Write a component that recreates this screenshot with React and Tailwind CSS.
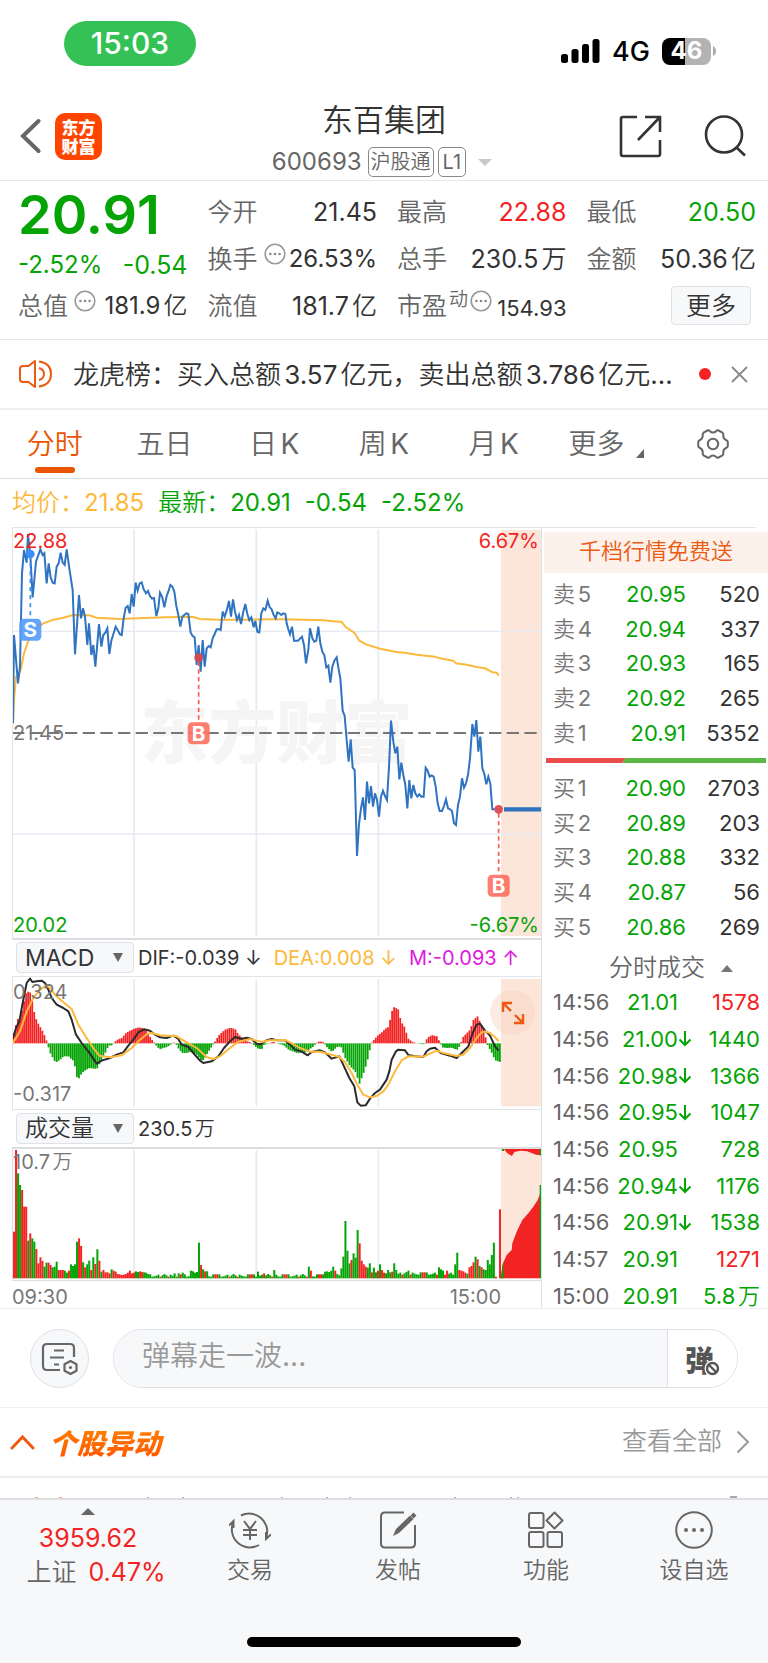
import React from "react";

const GREEN = "#05a405";
const RED = "#f42323";

/* Chart data is stored in thirds of a pixel; x runs from 39 to 1623. */
const PRICE_MORNING = [
  [39, 610], [42, 345], [54, 490], [60, 440], [66, 160], [72, 90], [80, 128], [84, 42], [91, 105], [98, 232],
  [108, 125], [121, 88], [128, 105], [133, 100], [140, 190], [146, 130], [152, 172], [158, 188], [164, 190],
  [170, 140], [176, 130], [182, 98], [188, 128], [194, 135], [200, 88], [208, 145], [218, 210], [225, 403],
  [237, 225], [243, 295], [249, 265], [255, 290], [262, 375], [267, 310], [274, 405], [280, 375], [286, 440],
  [297, 312], [304, 380], [310, 345], [316, 338], [322, 325], [328, 402], [334, 362], [347, 320], [354, 332],
  [360, 343], [365, 345], [371, 295], [377, 263], [383, 258], [389, 280], [395, 222], [401, 260], [407, 188],
  [413, 212], [419, 190], [425, 187], [431, 208], [438, 220], [444, 213], [450, 228], [456, 236], [462, 234],
  [469, 288], [475, 265], [480, 218], [487, 232], [493, 262], [500, 228], [506, 212], [511, 195], [517, 200],
  [523, 215], [529, 258], [535, 285], [541, 320], [547, 290], [553, 285], [559, 280], [565, 282], [572, 338],
  [578, 348], [584, 352], [590, 435], [596, 375], [602, 455], [608, 360], [614, 440], [620, 385], [626, 378],
  [632, 382], [638, 355], [644, 342], [650, 328], [656, 327], [662, 330], [668, 275], [674, 290], [680, 272],
  [687, 243], [693, 290], [699, 238], [705, 275], [711, 300], [717, 285], [723, 312], [729, 280], [736, 252],
  [742, 282], [748, 300], [754, 292], [761, 322], [766, 303], [772, 335], [778, 337], [784, 280], [790, 265],
  [796, 270], [803, 242], [809, 262],
];
const PRICE_AFTERNOON = [
  [5, 268], [11, 285], [17, 295], [22, 277], [28, 280], [34, 285], [40, 280], [46, 282], [50, 310], [54, 325],
  [60, 343], [66, 320], [72, 362], [84, 362], [96, 350], [102, 375], [108, 430], [115, 390], [120, 325],
  [127, 355], [133, 365], [139, 362], [145, 320], [151, 370], [157, 395], [163, 405], [169, 442], [175, 437],
  [181, 488], [187, 440], [193, 422], [200, 412], [206, 448], [211, 475], [218, 572], [224, 588], [230, 660],
  [236, 725], [242, 658], [248, 743], [254, 750], [261, 1008], [267, 912], [273, 865], [279, 832], [285, 900],
  [291, 785], [297, 850], [303, 798], [309, 860], [315, 820], [321, 840], [327, 890], [333, 830], [339, 812],
  [345, 828], [351, 840], [357, 740], [363, 602], [370, 665], [376, 700], [382, 680], [388, 778], [394, 728],
  [400, 765], [406, 795], [412, 865], [418, 780], [424, 835], [430, 795], [436, 820], [442, 830], [448, 823],
  [454, 830], [461, 830], [467, 743], [473, 752], [479, 770], [485, 766], [491, 770], [497, 800], [503, 850],
  [509, 873], [516, 873], [522, 858], [528, 838], [534, 865], [540, 868], [546, 873], [552, 910], [558, 915],
  [564, 855], [570, 830], [576, 775], [582, 803], [588, 790], [594, 765], [600, 715], [607, 612], [613, 650],
  [619, 600], [625, 695], [631, 650], [637, 745], [643, 762], [649, 793], [655, 770], [661, 790], [667, 868],
  [686, 868],
];
const AVG_MORNING = [
  [39, 610], [42, 540], [48, 470], [54, 468], [62, 450], [72, 400], [82, 370], [92, 345], [105, 328],
  [130, 310], [160, 299], [190, 293], [218, 285], [268, 286], [290, 293], [360, 297], [430, 294], [500, 292],
  [540, 291], [580, 291], [600, 297], [660, 299], [740, 299], [809, 298],
];
const AVG_AFTERNOON = [
  [40, 298], [100, 299], [160, 301], [215, 306], [228, 322], [253, 338], [268, 362], [290, 374], [330, 386],
  [380, 396], [410, 399], [440, 404], [495, 410], [510, 415], [550, 422], [558, 430], [590, 434], [620, 441],
  [645, 445], [668, 457], [680, 458], [686, 467],
];
const HIST_MORNING = [
  [38, 320], [45, 300], [50, 268], [60, 268], [70, 220], [78, 190], [88, 183], [95, 205], [100, 240],
  [110, 275], [120, 292], [130, 310], [138, 330], [141, 341], [150, 370], [166, 399], [180, 390], [190, 380],
  [205, 380], [215, 390], [222, 395], [228, 440], [235, 448], [245, 430], [258, 420], [268, 415], [290, 418],
  [300, 398], [315, 370], [325, 348], [335, 347], [341, 341], [345, 335], [355, 328], [365, 325], [375, 312],
  [385, 305], [400, 298], [415, 293], [430, 296], [440, 305], [450, 322], [460, 337], [465, 341], [470, 352],
  [480, 358], [500, 352], [510, 346], [514, 341], [520, 338], [527, 341], [532, 352], [545, 370], [560, 370],
  [575, 365], [590, 375], [605, 395], [612, 388], [622, 370], [635, 350], [641, 341], [645, 335], [655, 318],
  [665, 308], [675, 300], [690, 294], [705, 298], [715, 315], [725, 323], [740, 335], [752, 338], [756, 341],
  [762, 347], [775, 358], [785, 358], [790, 346], [800, 343], [806, 341],
];
const HIST_AFTERNOON = [
  [10, 336], [17, 341], [40, 346], [55, 360], [80, 370], [105, 368], [130, 350], [137, 341], [145, 336],
  [157, 336], [162, 341], [170, 352], [185, 367], [200, 352], [212, 350], [225, 385], [240, 410], [255, 425],
  [268, 462], [280, 430], [290, 400], [300, 355], [303, 341], [310, 332], [322, 318], [335, 308], [345, 297],
  [355, 292], [365, 245], [372, 232], [385, 240], [392, 275], [405, 295], [412, 325], [425, 336], [440, 341],
  [460, 344], [467, 341], [470, 325], [485, 316], [500, 320], [508, 336], [511, 341], [515, 353], [530, 355],
  [545, 354], [560, 361], [568, 350], [572, 341], [576, 325], [590, 310], [600, 300], [610, 270], [622, 260],
  [630, 278], [640, 300], [648, 330], [650, 341], [655, 352], [665, 370], [675, 392], [690, 397],
];
const DIF_MORNING = [
  [39, 325], [48, 295], [58, 275], [68, 220], [80, 160], [90, 147], [97, 157], [110, 155], [125, 153],
  [135, 160], [145, 180], [155, 205], [170, 225], [190, 235], [205, 245], [215, 270], [228, 315], [245, 340],
  [265, 365], [290, 402], [305, 393], [330, 385], [350, 375], [370, 368], [385, 348], [400, 330], [415, 308],
  [432, 299], [450, 303], [465, 315], [480, 323], [500, 325], [520, 318], [535, 328], [545, 345], [565, 352],
  [580, 370], [600, 393], [610, 400], [635, 395], [655, 380], [672, 355], [690, 335], [705, 322], [725, 328],
  [740, 324], [755, 328], [770, 342], [780, 344], [800, 332],
];
const DIF_AFTERNOON = [
  [5, 328], [20, 332], [45, 332], [60, 345], [75, 360], [95, 366], [113, 377], [125, 367], [150, 362],
  [165, 368], [185, 387], [208, 380], [222, 410], [238, 445], [253, 470], [262, 518], [272, 528], [287, 527],
  [300, 507], [315, 490], [330, 480], [350, 450], [358, 425], [365, 390], [378, 365], [385, 360], [405, 362],
  [415, 376], [435, 380], [460, 382], [470, 365], [480, 357], [495, 354], [512, 370], [540, 378], [560, 385],
  [575, 370], [595, 350], [608, 310], [620, 285], [630, 282], [645, 303], [660, 318], [675, 350], [686, 363],
];
const DEA_MORNING = [
  [39, 340], [60, 305], [80, 245], [100, 205], [120, 180], [138, 168], [150, 175], [165, 195], [190, 218],
  [215, 238], [235, 285], [260, 325], [280, 355], [298, 378], [330, 383], [365, 377], [395, 355], [415, 335],
  [440, 314], [455, 310], [480, 317], [530, 320], [560, 338], [590, 355], [620, 382], [640, 388], [660, 380],
  [690, 355], [715, 336], [750, 328], [785, 337], [808, 332],
];
const DEA_AFTERNOON = [
  [45, 331], [60, 338], [90, 355], [120, 366], [150, 366], [180, 374], [208, 382], [225, 398], [245, 430],
  [262, 465], [280, 495], [300, 503], [320, 499], [340, 485], [355, 465], [375, 425], [395, 392], [415, 380],
  [460, 381], [480, 372], [500, 363], [520, 370], [560, 379], [580, 375], [600, 355], [620, 325], [635, 308],
  [645, 305], [660, 310], [675, 322], [686, 335],
];

const join = (a, b) => a.concat(b.map(([x, y]) => [x + 810, y]));
const toPoints = (pts) => pts.map((p) => p.join(",")).join(" ");

const STEP = 6.1;
const barX = (i) => 39 + i * STEP;

function valueAt(pts, x) {
  for (let i = 1; i < pts.length; i++) {
    if (pts[i][0] >= x) {
      const [x0, y0] = pts[i - 1];
      const [x1, y1] = pts[i];
      return y0 + ((y1 - y0) * (x - x0)) / (x1 - x0);
    }
  }
  return pts[pts.length - 1][1];
}

const OPENING_VOLUME =
  "r905 r660 g730 g765 r780 r830 r830 g932 r910 g925 g935 r957 r1000 r982 r993 g1010 g998 r998 r1005 g1012 g1010 g995 r1020 r1020 r1020 g1022 g1028 r1022 g1003 g1008 g1003 g935 r925 r948 g997 r1012 g1003 g992 r1020 g982 r1002 g958 r992 g1025 r1020 r1027 r1027 r1030 g1018 r1022 r1025 r1032 r1033 r1035 r1034 r1032 r1028 r1022 r1030 r1028 g1024 g1026 r1024 r1026 g1027 g1028 g1032".split(
    " "
  );
const LATER_VOLUME = {
  79: "g1030", 81: "g1030", 83: "g1028", 87: "g1022", 88: "g1024", 89: "g1028", 90: "g1026", 91: "g938",
  92: "r1005", 93: "g1018", 94: "r1024", 95: "g1024", 120: "g1025", 123: "r1030", 128: "g1020", 129: "g1034",
  145: "g1010", 146: "r1022", 153: "g1025", 154: "g1024", 155: "g1026", 156: "g1022", 157: "g1010",
  158: "r1022", 161: "g1015", 162: "g980", 163: "g873", 164: "g962", 165: "g1000", 166: "r990", 167: "g970",
  168: "g983", 169: "g900", 170: "r940", 171: "r992", 172: "r1003", 173: "r1010", 174: "g1013", 175: "g1000",
  176: "r1027", 177: "g1013", 178: "g1027", 179: "r1022", 180: "g1003", 181: "r1020", 182: "r1028",
  183: "g1030", 184: "g1020", 185: "g1027", 186: "r1025", 187: "g1000", 188: "g1020", 194: "g1022",
  209: "g1012", 210: "g1018", 211: "g1022", 213: "r1022", 215: "g1028", 217: "g1003", 218: "g968",
  219: "r1020", 220: "r1022", 221: "r1024", 222: "r1028", 224: "r1012", 225: "r1008", 226: "r997",
  227: "g980", 228: "r988", 229: "g1008", 230: "r1012", 231: "g1018", 232: "g1020", 233: "g990",
  234: "g1003", 235: "g975", 236: "g938", 237: "r1040", 238: "", 239: "r838",
};

function volumeBars() {
  const bars = [];
  for (let i = 0; i < 240; i++) {
    let spec = OPENING_VOLUME[i] ?? LATER_VOLUME[i];
    if (spec === undefined) {
      const n = (i * 7919 + 13 * i * i) % 17;
      spec = (n % 2 ? "r" : "g") + (1040 - (n % 9) - (i > 185 ? 6 : 0));
    }
    if (spec) bars.push({ i, color: spec[0] === "r" ? RED : GREEN, top: Number(spec.slice(1)) });
  }
  return bars;
}

function GridLines({ top, bottom }) {
  return (
    <g stroke="#e6eaf2" strokeWidth="5">
      <line x1="402" x2="402" y1={top} y2={bottom} />
      <line x1="769" x2="769" y1={top} y2={bottom} />
      <line x1="1135" x2="1135" y1={top} y2={bottom} />
    </g>
  );
}

function TradeMark({ x, y, letter, fill }) {
  return (
    <g>
      <rect x={x - 33} y={y - 33} width="66" height="66" rx="13" fill={fill} fillOpacity="0.92" />
      <text x={x} y={y + 22} textAnchor="middle" fontSize="62" fontWeight="700" fill="#fff" fontFamily="Inter, sans-serif">
        {letter}
      </text>
    </g>
  );
}

function PriceChart() {
  return (
    <div className="relative h-[411px] border-t border-l border-[#e2e4ea]">
      <svg className="block h-full w-full" viewBox="39 24 1584 1230" preserveAspectRatio="none" aria-label="分时走势">
        <rect x="1503" y="30" width="120" height="1218" fill="#fce5d9" />
        <GridLines top={28} bottom={1248} />
        <g stroke="#e6eaf2" strokeWidth="4">
          <line x1="36" x2="1623" y1="334" y2="334" />
          <line x1="36" x2="1623" y1="942" y2="942" />
        </g>
        <text x="829" y="715" textAnchor="middle" fontSize="204" fontWeight="900" fill="#f5f5f6" fontFamily="Noto Sans CJK SC, sans-serif">
          东方财富
        </text>
        <line x1="36" x2="1612" y1="639" y2="639" stroke="#777" strokeWidth="6" strokeDasharray="37 16" />
        <polyline points={toPoints(join(AVG_MORNING, AVG_AFTERNOON))} fill="none" stroke="#fcb93c" strokeWidth="6" />
        <polyline points={toPoints(join(PRICE_MORNING, PRICE_AFTERNOON))} fill="none" stroke="#2f73c1" strokeWidth="6" />
        <line x1="1512" x2="1623" y1="868" y2="868" stroke="#2f73c1" strokeWidth="13" />
        <line x1="91" x2="91" y1="105" y2="300" stroke="#3f8df8" strokeWidth="5" strokeDasharray="13 11" />
        <circle cx="91" cy="102" r="13" fill="#3f8df8" />
        <TradeMark x={91} y={329} letter="S" fill="#579cfb" />
        <line x1="596" x2="596" y1="425" y2="608" stroke="#fb5b4c" strokeWidth="5" strokeDasharray="13 10" />
        <circle cx="596" cy="413" r="13" fill="#d04a52" />
        <TradeMark x={596} y={640} letter="B" fill="#fd7264" />
        <line x1="1496" x2="1496" y1="880" y2="1064" stroke="#fb5b4c" strokeWidth="5" strokeDasharray="13 10" />
        <circle cx="1496" cy="868" r="13" fill="#e0505a" />
        <TradeMark x={1496} y={1097} letter="B" fill="#fd7264" />
      </svg>
      <span className="absolute top-px left-0 text-[20px] leading-6 text-[#f42323]">22.88</span>
      <span className="absolute top-px right-0.5 text-[20px] leading-6 text-[#f42323]">6.67%</span>
      <span className="absolute top-[193px] left-0 text-[20px] leading-6 text-[#777]">21.45</span>
      <span className="absolute bottom-px left-0 text-[20px] leading-6 text-[#05a405]">20.02</span>
      <span className="absolute right-0.5 bottom-px text-[20px] leading-6 text-[#05a405]">-6.67%</span>
    </div>
  );
}

function MacdChart() {
  const hist = join(HIST_MORNING, HIST_AFTERNOON);
  return (
    <div className="relative h-[133px] border-t border-l border-[#e2e4ea]">
      <svg className="block h-full w-full" viewBox="39 142 1584 396" preserveAspectRatio="none" aria-label="MACD">
        <rect x="1503" y="148" width="120" height="382" fill="#fce5d9" />
        <GridLines top={148} bottom={530} />
        {Array.from({ length: 240 }, (_, i) => {
          const y = valueAt(hist, barX(i) + 2);
          return (
            <rect
              key={i}
              x={barX(i)}
              width="5.4"
              y={Math.min(y, 341)}
              height={Math.abs(y - 341)}
              fill={y < 341 ? RED : GREEN}
            />
          );
        })}
        <polyline points={toPoints(join(DIF_MORNING, DIF_AFTERNOON))} fill="none" stroke="#2b2b2b" strokeWidth="6" strokeLinejoin="round" />
        <polyline points={toPoints(join(DEA_MORNING, DEA_AFTERNOON))} fill="none" stroke="#fcb93c" strokeWidth="6" strokeLinejoin="round" />
      </svg>
      <span className="absolute top-[3px] left-0 text-[20px] leading-6 text-[#777]">0.324</span>
      <span className="absolute bottom-[3px] left-0 text-[20px] leading-6 text-[#777]">-0.317</span>
      <button type="button" aria-label="全屏" className="absolute top-[13px] right-[6px] flex size-[45px] items-center justify-center rounded-full bg-[#f9d3c0]/45">
        <svg width="24" height="24" viewBox="0 0 24 24" fill="none" stroke="#ee5a12" strokeWidth="2.400">
          <path d="M2 11V2h9M2 2l8 8M14 14l8 8M22 13v9h-9" />
        </svg>
      </button>
    </div>
  );
}

function VolumeChart() {
  return (
    <div className="relative h-[134px] border-t-2 border-b border-l border-[#dcdde0]">
      <svg className="block h-full w-full" viewBox="39 657 1584 393" preserveAspectRatio="none" aria-label="成交量">
        <rect x="1503" y="655" width="120" height="390" fill="#fce5d9" />
        <GridLines top={660} bottom={1045} />
        {volumeBars().map((b) => (
          <rect key={b.i} x={barX(b.i)} width="6" y={b.top} height={1045 - b.top} fill={b.color} />
        ))}
        <path d="M1503 1045l4-40 13-30 15-15 2-20 13-35 17-35 18-20 15-20 13-20 8-20v255z" fill={RED} />
        <path d="M1503 1045v-8l8-45v53zM1619 765h5v280h-5z" fill={GREEN} />
        <path d="M1508 653h115v23l-15-2-15-6-12-4-20-2-18 4-7 12-14-8-8-10z" fill={RED} />
        <path d="M1503 653h9v10h-5zM1619 653h4v23h-4z" fill={GREEN} />
      </svg>
      <span className="absolute top-px left-0 text-[20px] leading-6 text-[#777]">10.7万</span>
    </div>
  );
}

function IndicatorSelect({ label, value }) {
  return (
    <div className="relative">
      <select
        aria-label={label}
        defaultValue={value}
        className="h-[31px] w-[118px] appearance-none rounded-[4px] border border-[#dfe1e6] bg-[#f7f8fa] pl-2 text-[23px] leading-7 text-[#333]"
      >
        <option>{value}</option>
      </select>
      <svg className="pointer-events-none absolute top-[11px] right-[11px]" width="10" height="9" viewBox="0 0 10 9">
        <path d="M0 0h10L5 9z" fill="#666" />
      </svg>
    </div>
  );
}

function InfoDots() {
  return (
    <svg className="shrink-0" width="22" height="22" viewBox="0 0 22 22" fill="none" stroke="#999" strokeWidth="1.6">
      <circle cx="11" cy="11" r="9.8" />
      <g fill="#888" stroke="none">
        <circle cx="6.4" cy="11" r="1.3" />
        <circle cx="11" cy="11" r="1.3" />
        <circle cx="15.6" cy="11" r="1.3" />
      </g>
    </svg>
  );
}

function Stat({ label, value, sup, dots, color = "text-[#333]", size = "text-[25px]" }) {
  return (
    <div className="flex items-center whitespace-nowrap">
      <dt className="flex items-start text-[#666]">
        {label}
        {sup && <span className="pl-0.5 text-[19px] leading-5">{sup}</span>}
        {dots && (
          <span className={sup ? "pl-0.5" : "pl-1.5"}>
            <InfoDots />
          </span>
        )}
      </dt>
      <dd className={"ml-auto " + size + " " + color}>{value}</dd>
    </div>
  );
}

const SELLS = [["卖5", "20.95", "520"], ["卖4", "20.94", "337"], ["卖3", "20.93", "165"], ["卖2", "20.92", "265"], ["卖1", "20.91", "5352"]];
const BUYS = [["买1", "20.90", "2703"], ["买2", "20.89", "203"], ["买3", "20.88", "332"], ["买4", "20.87", "56"], ["买5", "20.86", "269"]];
const TRADES = [
  ["14:56", "21.01", "", "1578", true],
  ["14:56", "21.00", "↓", "1440"],
  ["14:56", "20.98", "↓", "1366"],
  ["14:56", "20.95", "↓", "1047"],
  ["14:56", "20.95", "", "728"],
  ["14:56", "20.94", "↓", "1176"],
  ["14:56", "20.91", "↓", "1538"],
  ["14:57", "20.91", "", "1271", true],
  ["15:00", "20.91", "", "5.8万"],
];

function BookTable({ rows, label }) {
  return (
    <table aria-label={label} className="h-[173px] w-full text-[22px] leading-7">
      <tbody>
        {rows.map(([name, price, qty]) => (
          <tr key={name}>
            <th scope="row" className="w-[70px] p-0 pl-[11px] text-left font-normal text-[#777]">{name}</th>
            <td className="w-[74px] p-0 text-right text-[#05a405]">{price}</td>
            <td className="p-0 pr-2 text-right text-[#333]">{qty}</td>
          </tr>
        ))}
      </tbody>
    </table>
  );
}

function DownArrow() {
  return (
    <svg className="-mt-1 inline-block" width="14" height="17" viewBox="0 0 14 17" fill="none" stroke="currentColor" strokeWidth="2">
      <path d="M7 1v14M1.500 9.500L7 15l5.500-5.500" />
    </svg>
  );
}

function OrderPanel() {
  return (
    <aside className="w-[227px] shrink-0 border-l border-[#dcdfe6]">
      <div className="mr-3 border-t border-[#e2e4ea]" />
      <a href="#levels" className="mt-1 ml-0.5 flex h-[41px] items-center justify-center bg-[#fdf1eb] pb-1 text-[22px] leading-8 text-[#ec5a12]">
        千档行情免费送
      </a>
      <div className="pt-1">
        <BookTable rows={SELLS} label="卖盘" />
      </div>
      <svg className="mt-2 mb-2 ml-1 block h-[5px] w-[220px]" viewBox="0 0 220 5" preserveAspectRatio="none">
        <path d="M0 0h80l-4 5H0z" fill="#ea4c4c" />
        <path d="M80 0h140v5H76z" fill="#5ab946" />
      </svg>
      <BookTable rows={BUYS} label="买盘" />
      <button type="button" className="flex h-[40px] w-full items-center justify-center gap-4 pt-2 pl-8 text-[24px] leading-8 text-[#666]">
        分时成交
        <svg width="12" height="7" viewBox="0 0 12 7"><path d="M6 0l6 7H0z" fill="#777" /></svg>
      </button>
      <table aria-label="分时成交" className="-mb-[6px] h-[330px] w-full text-[22px] leading-7">
        <tbody>
          {TRADES.map(([time, price, arrow, qty, up], i) => (
            <tr key={i}>
              <td className="w-[70px] p-0 pl-[11px] text-[#666]">{time}</td>
              <td className="w-[66px] p-0 text-right text-[#05a405]">{price}</td>
              <td className="w-[15px] p-0 align-middle text-[#05a405]">{arrow && <DownArrow />}</td>
              <td className={up ? "p-0 pr-2 text-right text-[#f42323]" : "p-0 pr-2 text-right text-[#05a405]"}>{qty}</td>
            </tr>
          ))}
        </tbody>
      </table>
    </aside>
  );
}

function StatusBar() {
  return (
    <div className="flex h-24 items-start justify-between pr-[52px] pl-16">
      <div className="mt-[21px] flex h-[45px] w-[132px] items-center justify-center rounded-full bg-[#34c257] text-[30px] font-medium text-white">
        15:03
      </div>
      <div className="mt-[36px] flex h-[30px] items-center">
        <svg width="39" height="25" viewBox="0 0 39 25">
          <rect x="0" y="15" width="7" height="9" rx="2.500" />
          <rect x="10.500" y="10" width="7" height="14" rx="2.500" />
          <rect x="21" y="5" width="7" height="19" rx="2.500" />
          <rect x="31.500" y="0" width="7" height="24" rx="2.500" />
        </svg>
        <span className="pt-0.5 pl-3 text-[27px] leading-8 font-medium text-black">4G</span>
        <span className="ml-3 flex h-[27px] w-[49px] items-center justify-center rounded-[8px] bg-linear-to-r from-black from-47% to-[#b3b3b3] to-47% text-[24px] leading-7 font-bold text-white">
          46
        </span>
        <svg className="ml-0.5" width="3" height="10" viewBox="0 0 3 10"><path d="M0 0q3 1.500 3 5t-3 5z" fill="#aaa" /></svg>
      </div>
    </div>
  );
}

function Header() {
  return (
    <header className="grid h-[85px] grid-cols-[1fr_auto_1fr] items-center border-b border-[#e8e8e8]">
      <div className="flex items-center gap-[14px] pb-1 pl-5">
        <a href="#back" aria-label="返回">
          <svg width="21" height="36" viewBox="0 0 21 36" fill="none" stroke="#666" strokeWidth="4" strokeLinecap="round">
            <path d="M18.500 3L3 18l15.500 15" />
          </svg>
        </a>
        <a href="#home" className="flex size-[47px] flex-col items-center justify-center rounded-[10px] bg-[#ff4400] font-['Noto_Sans_CJK_SC',sans-serif] text-[17px] leading-[19px] font-black text-white">
          <span>东方</span>
          <span>财富</span>
        </a>
      </div>
      <div className="flex flex-col items-center">
        <h1 className="pt-1 text-[31px] leading-10 text-[#333]">东百集团</h1>
        <div className="mt-1 flex h-9 items-center gap-1 text-[#666]">
          <span className="text-[24px]">600693</span>
          <span className="ml-0.5 rounded-[5px] border border-[#888] px-0.5 text-[20px] leading-7">沪股通</span>
          <span className="rounded-[5px] border border-[#888] px-1 text-[20px] leading-7">L1</span>
          <svg className="mr-1 ml-2" width="14" height="7" viewBox="0 0 14 7"><path d="M0 0h14L7 7z" fill="#c8c8c8" /></svg>
        </div>
      </div>
      <div className="flex items-center justify-end gap-[42px] pr-[22px] pb-1">
        <button type="button" aria-label="分享">
          <svg width="43" height="43" viewBox="0 0 43 43" fill="none" stroke="#333" strokeWidth="2.600">
            <path d="M18 2H4Q2 2 2 4v35q0 2 2 2h35q2 0 2-2V25M26 2h15v15M41 2L19 25" />
          </svg>
        </button>
        <button type="button" aria-label="搜索">
          <svg width="42" height="42" viewBox="0 0 42 42" fill="none" stroke="#333" strokeWidth="2.600">
            <circle cx="20" cy="19.500" r="18" />
            <path d="M32 32l9 8.500" />
          </svg>
        </button>
      </div>
    </header>
  );
}

function Quote() {
  return (
    <section className="border-b border-[#e8e8e8] pt-[7px] pr-3 pb-2.5 pl-[18px]">
      <dl className="grid auto-rows-[47px] grid-cols-4 gap-x-5 text-[25px] leading-8">
        <div className="flex items-center">
          <dd className="pt-1.5 text-[54px] leading-none font-semibold text-[#05a405]">20.91</dd>
        </div>
        <Stat label="今开" value="21.45" />
        <Stat label="最高" value="22.88" color="text-[#f42323]" />
        <Stat label="最低" value="20.50" color="text-[#05a405]" />
        <div className="flex items-center justify-between pt-3 text-[#05a405]">
          <dd className="text-[24px]">-2.52%</dd>
          <dd>-0.54</dd>
        </div>
        <Stat label="换手" value="26.53%" dots size="text-[24px]" />
        <Stat label="总手" value="230.5万" />
        <Stat label="金额" value="50.36亿" />
        <Stat label="总值" value="181.9亿" dots size="text-[24px]" />
        <Stat label="流值" value="181.7亿" />
        <Stat label="市盈" sup="动" dots value="154.93" size="pt-1 text-[22px]" />
        <div className="flex items-center justify-end pr-[5px]">
          <button type="button" className="h-[39px] w-20 rounded-[4px] border border-[#dfe1e6] bg-[#f7f8fa] text-[25px] leading-8 text-[#333]">
            更多
          </button>
        </div>
      </dl>
    </section>
  );
}

function News() {
  return (
    <section className="flex h-[70px] items-center border-b-2 border-[#eeeeee] pr-5 pl-[19px]">
      <svg className="shrink-0" width="34" height="30" viewBox="0 0 34 30" fill="none" stroke="#ee5a12" strokeWidth="2">
        <path d="M16 2v26l-6.500-5H4q-3 0-3-3V10q0-3 3-3h5.500z" strokeLinejoin="round" />
        <path d="M20 9q5 1.500 5 6t-5 6M20 2.500Q32 4 32 15T20 27.500" />
      </svg>
      <a href="#news" className="min-w-0 flex-1 truncate pl-5 text-[26px] text-[#333]">
        龙虎榜：买入总额3.57亿元，卖出总额3.786亿元…
      </a>
      <span className="mr-5 ml-3 size-3 rounded-full bg-[#f42323]" />
      <button type="button" aria-label="关闭">
        <svg width="17" height="17" viewBox="0 0 17 17" stroke="#888" strokeWidth="1.800"><path d="M1 1l15 15M16 1L1 16" /></svg>
      </button>
    </section>
  );
}

function Tabs() {
  return (
    <nav className="grid h-[69px] grid-cols-7 items-center border-b border-[#dcdde3] text-center text-[28px] text-[#666]">
      <a href="#min" aria-current="page" className="flex h-full flex-col items-center text-[#ec5500]">
        <span className="pt-3 leading-[45px]">分时</span>
        <span className="h-1.5 w-10 rounded-full bg-[#ec5500]" />
      </a>
      <a href="#5d">五日</a>
      <a href="#day">日K</a>
      <a href="#week">周K</a>
      <a href="#month">月K</a>
      <a href="#more" className="flex items-end justify-center gap-3 pl-1.5">
        更多
        <svg className="mb-[7px]" width="8" height="9" viewBox="0 0 8 9"><path d="M8 0v9H0z" fill="#666" /></svg>
      </a>
      <button type="button" aria-label="设置" className="flex justify-center">
        <svg width="32" height="30" viewBox="0 0 32 30" fill="none" stroke="#666" strokeWidth="2" strokeLinejoin="round">
          <path d="M10.500 1.500q1.500-.5 2.500.7 1.200 1.300 3 1.300t3-1.300q1-1.200 2.500-.7l4 2.200q1 .8.800 2.300-.4 3.500 2.700 5 1.800.8 1.800 2v4q0 1.200-1.800 2-3.100 1.500-2.700 5 .2 1.500-.8 2.300l-4 2.200q-1.500.5-2.500-.7-1.200-1.300-3-1.300t-3 1.300q-1 1.200-2.500.7l-4-2.200q-1-.8-.8-2.300.4-3.500-2.700-5-1.800-.8-1.800-2v-4q0-1.200 1.800-2 3.100-1.500 2.700-5-.2-1.500.8-2.300z" />
          <circle cx="16" cy="15" r="5.200" />
        </svg>
      </button>
    </nav>
  );
}

function Comment() {
  return (
    <section className="flex items-center gap-6 border-y border-[#f0f0f0] pt-5 pr-[30px] pb-[19px] pl-[30px]">
      <button type="button" aria-label="弹幕设置" className="flex size-[59px] items-center justify-center rounded-full border border-[#dfe0e6] bg-[#f7f8fa]">
        <svg width="37" height="34" viewBox="0 0 37 34" fill="none" stroke="#666" strokeWidth="2.200">
          <path d="M19 28H6q-4 0-4-4V6q0-4 4-4h23q4 0 4 4v9M13 8.500h10M9 15.500h14M13 22.500h5" />
          <path d="M29.500 19l6 3.300v6.400l-6 3.300-6-3.300v-6.400z" strokeLinejoin="round" />
          <circle cx="29.500" cy="25.500" r="1.600" fill="#666" stroke="none" />
        </svg>
      </button>
      <form className="flex h-[59px] min-w-0 flex-1 overflow-hidden rounded-full border border-[#dfe0e6]">
        <input aria-label="弹幕" placeholder="弹幕走一波..." className="min-w-0 flex-1 bg-[#f7f8fa] pb-1.5 pl-7 text-[28px] placeholder:text-[#999]" />
        <button type="button" aria-label="关闭弹幕" className="flex w-[70px] items-center justify-center border-l border-[#dfe0e6] bg-white pr-1.5">
          <span className="relative font-['Noto_Sans_CJK_SC',sans-serif] text-[29px] leading-8 font-black text-[#555]">
            弹
            <svg className="absolute -right-[7px] -bottom-0.5" width="17" height="17" viewBox="0 0 17 17" fill="#fff" stroke="#fff" strokeWidth="2">
              <circle cx="8.500" cy="8.500" r="7" />
              <circle cx="8.500" cy="8.500" r="5.500" stroke="#555" strokeWidth="2.400" />
              <path d="M4.500 4.500l8 8" stroke="#555" strokeWidth="2.400" />
            </svg>
          </span>
        </button>
      </form>
    </section>
  );
}

function Movements() {
  return (
    <section>
      <div className="flex h-[70px] items-center border-b-2 border-[#ececec] pr-[18px] pl-2.5">
        <svg width="25" height="16" viewBox="0 0 25 16" fill="none" stroke="#ee5a12" strokeWidth="3" strokeLinecap="round"><path d="M2 14L12.500 3 23 14" /></svg>
        <h2 className="bg-linear-to-b from-[#ff8a00] to-[#ff4a00] bg-clip-text pr-2 pl-3.5 font-['Noto_Sans_CJK_SC',sans-serif] text-[28px] leading-[48px] font-black text-transparent italic">个股异动</h2>
        <a href="#all" className="ml-auto flex items-center gap-3.5 text-[25px] text-[#999]">
          查看全部
          <svg width="14" height="24" viewBox="0 0 14 24" fill="none" stroke="#999" strokeWidth="2"><path d="M1.500 1.500L12 12 1.500 22.500" /></svg>
        </a>
      </div>
      <svg className="block h-5 w-full" viewBox="0 0 768 20" preserveAspectRatio="none">
        <path d="M35 19h3v1h-3zM59 19h3v1h-3z" fill="#f5a887" />
        <path d="M147 19h2v1h-2zM182 19h2v1h-2zM281 19h2v1h-2zM326 19h2v1h-2zM349 19h2v1h-2zM454 19h2v1h-2zM510 19h2v1h-2zM517 19h2v1h-2zM730 18h7v2h-7z" fill="#aaa" />
      </svg>
    </section>
  );
}

function NavItem({ label, children }) {
  return (
    <a href={"#" + label} className="flex flex-1 flex-col items-center pt-2.5 text-[23px] leading-8 text-[#666]">
      <svg width="42" height="40" viewBox="0 0 42 40" fill="none" stroke="#666" strokeWidth="2">{children}</svg>
      <span className="pt-1">{label}</span>
    </a>
  );
}

function BottomNav() {
  return (
    <footer className="border-t-2 border-[#dddee1] bg-[#f7f8fa]">
      <nav className="flex">
        <a href="#index" className="flex w-[176px] flex-col items-center pt-2 text-[25px] leading-[34px] text-[#f42323]">
          <svg width="14" height="7" viewBox="0 0 14 7"><path d="M7 0l7 7H0z" fill="#666" /></svg>
          <span className="pt-1.5">3959.62</span>
          <span className="flex gap-3 pl-4"><span className="text-[#666]">上证</span>0.47%</span>
        </a>
        <NavItem label="交易">
          <path d="M12 5.500A18 18 0 0 1 37 28M30 35A18 18 0 0 1 4.500 12M0 15.500l4.500-4.500v7M42 24.500L37 29v-7M15 11l6 8 6-8M21 19v11M14 20h14M14 25h14" />
        </NavItem>
        <NavItem label="发帖">
          <path d="M27 2.500H8q-4 0-4 4v27q0 4 4 4h26q4 0 4-4V15" />
          <path d="M16 26l3-7L33 5.500l3.500 3.500L22 23z" fill="#666" stroke="none" />
          <path d="M35 4l3 3" strokeWidth="4" />
        </NavItem>
        <NavItem label="功能">
          <rect x="4" y="3" width="14.500" height="15" rx="2" />
          <rect x="4" y="22" width="14.500" height="15" rx="2" />
          <rect x="22.500" y="22" width="14.500" height="15" rx="2" />
          <path d="M29.500 2.500l8 8-8 8-8-8z" strokeLinejoin="round" />
        </NavItem>
        <NavItem label="设自选">
          <circle cx="21" cy="20" r="17.800" />
          <g fill="#666" stroke="none">
            <circle cx="13" cy="20" r="2" />
            <circle cx="21" cy="20" r="2" />
            <circle cx="29" cy="20" r="2" />
          </g>
        </NavItem>
      </nav>
      <div className="flex justify-center pt-[48px] pb-4">
        <div className="h-2.5 w-[274px] rounded-full bg-black" />
      </div>
    </footer>
  );
}

export default function App() {
  return (
    <div className="w-full overflow-hidden bg-white font-['Inter','Noto_Sans_CJK_SC_DemiLight','Noto_Sans_CJK_SC',sans-serif] [text-autospace:normal]">
      <StatusBar />
      <Header />
      <Quote />
      <News />
      <Tabs />
      <div className="flex h-12 items-center pl-3 text-[24px] text-[#05a405]">
        <span className="text-[#fcb93c]">均价：21.85</span>
        <span className="pl-3.5">最新：20.91</span>
        <span className="pl-3.5">-0.54</span>
        <span className="pl-3.5">-2.52%</span>
      </div>
      <main className="flex">
        <div className="min-w-0 flex-1 pl-3">
          <PriceChart />
          <div className="flex h-[38px] items-center border-t-2 border-[#dcdde0] pl-1 text-[20px] whitespace-nowrap text-[#333]">
            <IndicatorSelect label="指标" value="MACD" />
            <span className="pl-1">DIF:-0.039 ↓</span>
            <span className="pl-3 text-[#fcb93c]">DEA:0.008 ↓</span>
            <span className="pl-3 text-[#e019e0]">M:-0.093 ↑</span>
          </div>
          <MacdChart />
          <div className="flex h-[38px] items-center border-t border-[#e2e4ea] pl-1 text-[20px] text-[#333]">
            <IndicatorSelect label="副图指标" value="成交量" />
            <span className="pl-1">230.5万</span>
          </div>
          <VolumeChart />
          <div className="flex h-[27px] items-center justify-between pt-1 pr-10 text-[20px] leading-6 text-[#777]">
            <span>09:30</span>
            <span>15:00</span>
          </div>
        </div>
        <OrderPanel />
      </main>
      <Comment />
      <Movements />
      <BottomNav />
    </div>
  );
}
